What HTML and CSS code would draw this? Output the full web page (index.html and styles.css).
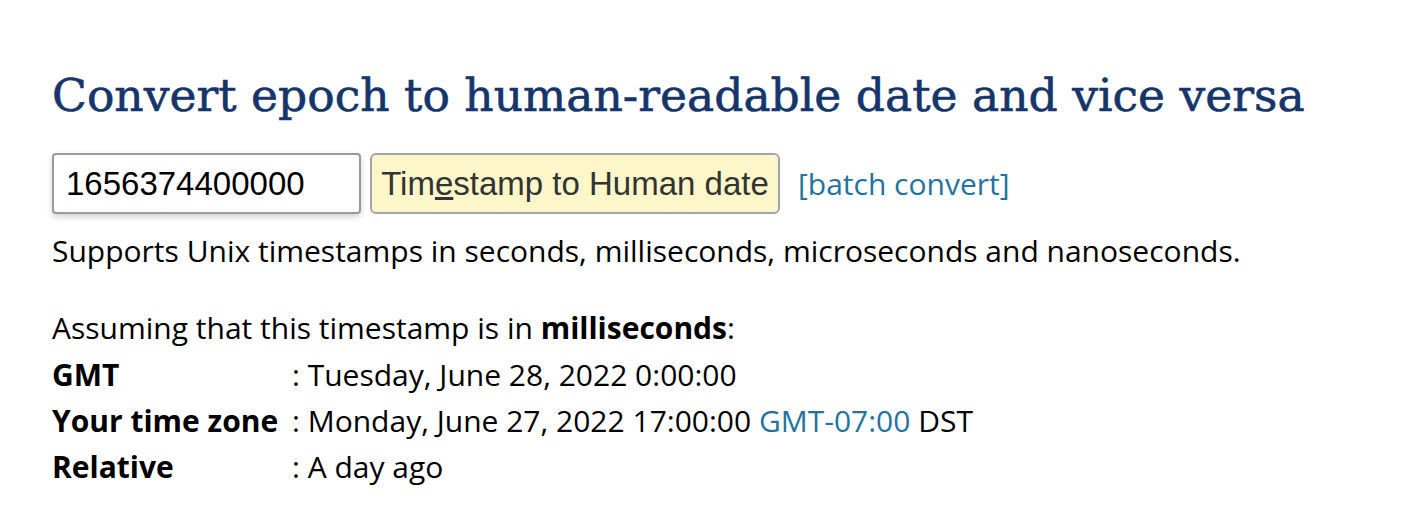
FILE: index.html
```html
<!DOCTYPE html>
<html>
<head>
<meta charset="utf-8">
<link rel="stylesheet" href="styles.css">
</head>
<body>
<main class="page">
  <h1 class="title">Convert epoch to human-readable date and vice versa</h1>
  <form class="convert">
    <input class="ts-input" type="text" value="1656374400000">
    <button class="ts-button" type="button">Tim<u>e</u>stamp to Human date</button>
    <a class="link batch" href="#">[batch convert]</a>
  </form>
  <p class="supports">Supports Unix timestamps in seconds, milliseconds, microseconds and nanoseconds.</p>
  <div class="result">
    <p class="assume">Assuming that this timestamp is in <b>milliseconds</b>:</p>
    <div class="rows">
      <div class="label">GMT</div><div class="value">: Tuesday, June 28, 2022 0:00:00</div>
      <div class="label">Your time zone</div><div class="value">: Monday, June 27, 2022 17:00:00 <a class="link" href="#">GMT-07:00</a> DST</div>
      <div class="label">Relative</div><div class="value">: A day ago</div>
    </div>
  </div>
</main>
</body>
</html>
```
FILE: styles.css
```css
* { box-sizing: border-box; }
body {
  margin: 0;
  background: #fff;
  font-family: "Open Sans", sans-serif;
  font-size: 30px;
  color: #000;
}
.page {
  padding: 64px 52px 0 52px;
}
.title {
  margin: 0;
  font-family: "DejaVu Serif", serif;
  font-weight: normal;
  font-size: 45.6px;
  line-height: 64px;
  color: #15356b;
  -webkit-text-stroke: 0.6px #15356b;
}
.convert {
  display: flex;
  align-items: center;
  margin-top: 25px;
}
.ts-input {
  width: 309px;
  height: 61px;
  border: 2px solid #9a9a9a;
  border-radius: 4px;
  padding: 0 12px;
  font-family: "Liberation Sans", Arial, sans-serif;
  font-size: 33px;
  color: #000;
  box-shadow: 0 3px 6px rgba(0,0,0,0.18);
  outline: none;
}
.ts-button {
  margin-left: 9px;
  width: 410px;
  height: 61px;
  border: 2px solid #a3a5ad;
  border-radius: 6px;
  background: #fdf6c9;
  font-family: "Liberation Sans", Arial, sans-serif;
  font-size: 33px;
  color: #333;
  padding: 0;
}
.link {
  color: #23739f;
  text-decoration: none;
}
.batch {
  margin-left: 18px;
}
.supports {
  margin: 14px 0 0 0;
  line-height: 46px;
}
.result {
  margin-top: 31px;
}
.assume {
  margin: 0;
  line-height: 46px;
}
.rows {
  display: grid;
  grid-template-columns: 240px auto;
  line-height: 46px;
  margin-top: 1px;
}
.label {
  font-weight: bold;
}
```
